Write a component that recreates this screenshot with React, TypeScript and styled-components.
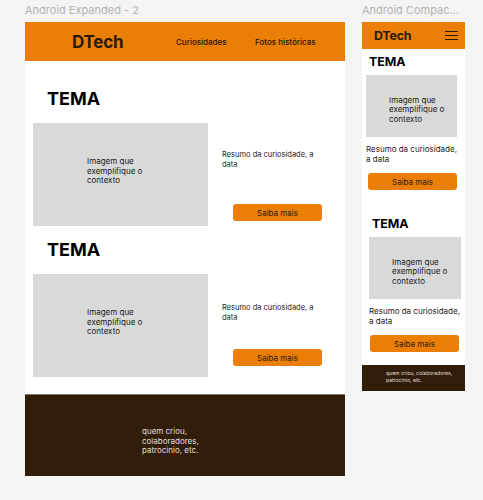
import React from "react";
import styled, { createGlobalStyle } from "styled-components";

const ORANGE = "#EB7F06";
const BROWN = "#301E0A";
const INK = "#2A1A08";

const Global = createGlobalStyle`
  html, body { margin: 0; padding: 0; background: #F4F4F4; }
  body { font-family: Inter, "Noto Sans", sans-serif; -webkit-font-smoothing: antialiased; }
  * { box-sizing: border-box; }
`;

const Canvas = styled.div`
  display: flex;
  align-items: flex-start;
  gap: 17px;
  padding-left: 25px;
  width: 483px;
  height: 500px;
  overflow: hidden;
`;

const Board = styled.div<{ $w: number }>`
  display: flex;
  flex-direction: column;
  width: ${(p) => p.$w}px;
`;

const BoardLabel = styled.div`
  font-size: 11px;
  line-height: 20px;
  height: 22px;
  color: #B3B3B3;
  white-space: nowrap;
  overflow: hidden;
`;

const Frame = styled.div`
  display: flex;
  flex-direction: column;
  background: #FFFFFF;
`;

/* ---------- Expanded ---------- */

const Header = styled.header`
  height: 39px;
  background: ${ORANGE};
  display: flex;
  align-items: center;
  padding-left: 47px;
`;

const Logo = styled.div<{ $size: number }>`
  font-size: ${(p) => p.$size}px;
  font-weight: 700;
  color: ${INK};
  letter-spacing: -0.2px;
`;

const BigLogoBox = styled.div`
  width: 104px;
`;

const Nav = styled.nav`
  display: flex;
  gap: 28.5px;
`;

const NavLink = styled.span`
  font-size: 8px;
  font-weight: 500;
  color: #1E1206;
`;

const Main = styled.main`
  display: flex;
  flex-direction: column;
  gap: 13px;
  padding: 27px 0 17px 8px;
`;

const Section = styled.section`
  display: flex;
  flex-direction: column;
`;

const Title = styled.h2`
  margin: 0 0 13px;
  padding-left: 14px;
  font-size: 18px;
  line-height: 22px;
  font-weight: 700;
  color: #000;
`;

const Row = styled.div`
  display: flex;
  gap: 14px;
`;

const ImageBox = styled.div<{ $w: number; $h: number; $pt: number; $pl: number }>`
  width: ${(p) => p.$w}px;
  height: ${(p) => p.$h}px;
  background: #D9D9D9;
  padding: ${(p) => p.$pt}px 0 0 ${(p) => p.$pl}px;
  flex-shrink: 0;
`;

const ImageCaption = styled.div`
  width: 68px;
  font-size: 8px;
  line-height: 9.5px;
  color: #1A1A1A;
`;

const Side = styled.div<{ $pt: number }>`
  display: flex;
  flex-direction: column;
  padding-top: ${(p) => p.$pt}px;
`;

const Summary = styled.p<{ $size: number }>`
  margin: 0;
  font-size: ${(p) => p.$size}px;
  line-height: 10px;
  color: #1A1A1A;
`;

const Button = styled.button<{ $w: number; $h: number; $mt: number; $ml: number }>`
  width: ${(p) => p.$w}px;
  height: ${(p) => p.$h}px;
  margin-top: ${(p) => p.$mt}px;
  margin-left: ${(p) => p.$ml}px;
  border: none;
  border-radius: 3px;
  background: ${ORANGE};
  font-family: Inter, "Noto Sans", sans-serif;
  font-size: 8px;
  color: ${INK};
  padding: 0;
  display: flex;
  align-items: center;
  justify-content: center;
`;

const Footer = styled.footer`
  height: 82px;
  background: ${BROWN};
  border-top: 1px solid #857A6E;
  padding: 32px 0 0 117px;
`;

const FooterText = styled.div<{ $size: number; $lh: number; $w: number }>`
  width: ${(p) => p.$w}px;
  font-size: ${(p) => p.$size}px;
  line-height: ${(p) => p.$lh}px;
  color: #E2DED9;
`;

/* ---------- Compact ---------- */

const CompactHeader = styled.header`
  height: 27px;
  background: ${ORANGE};
  display: flex;
  align-items: center;
  justify-content: space-between;
  padding: 0 7px 0 12px;
`;

const Burger = styled.div`
  width: 13px;
  display: flex;
  flex-direction: column;
  gap: 3px;
  span {
    display: block;
    height: 1px;
    background: ${INK};
  }
`;

const CompactMain = styled.main`
  display: flex;
  flex-direction: column;
  gap: 26px;
  padding: 5px 0 13px 4px;
`;

const CompactSection = styled.section<{ $shift: number }>`
  display: flex;
  flex-direction: column;
  margin-left: ${(p) => p.$shift}px;
`;

const CompactTitle = styled.h3`
  margin: 0 0 6px;
  padding-left: 3px;
  font-size: 12.4px;
  line-height: 15px;
  font-weight: 700;
  color: #000;
`;

const CompactSummary = styled(Summary)`
  margin-top: 7px;
`;

const CompactFooter = styled.footer`
  height: 26px;
  background: ${BROWN};
  padding: 5px 0 0 24px;
`;

const items = [
  { sidePt: 27, btnMt: 34 },
  { sidePt: 29, btnMt: 26 },
];

export default function App() {
  return (
    <>
      <Global />
      <Canvas>
        <Board $w={320}>
          <BoardLabel>Android Expanded - 2</BoardLabel>
          <Frame>
            <Header>
              <BigLogoBox>
                <Logo $size={17}>DTech</Logo>
              </BigLogoBox>
              <Nav>
                <NavLink>Curiosidades</NavLink>
                <NavLink>Fotos históricas</NavLink>
              </Nav>
            </Header>
            <Main>
              {items.map((it, i) => (
                <Section key={i}>
                  <Title>TEMA</Title>
                  <Row>
                    <ImageBox $w={175} $h={103} $pt={34} $pl={54}>
                      <ImageCaption>Imagem que exemplifique o contexto</ImageCaption>
                    </ImageBox>
                    <Side $pt={it.sidePt}>
                      <Summary $size={7.5}>
                        Resumo da curiosidade, a
                        <br />
                        data
                      </Summary>
                      <Button $w={89} $h={17} $mt={it.btnMt} $ml={11}>
                        Saiba mais
                      </Button>
                    </Side>
                  </Row>
                </Section>
              ))}
            </Main>
            <Footer>
              <FooterText $size={8} $lh={9.5} $w={70}>
                quem criou, colaboradores, patrocinio, etc.
              </FooterText>
            </Footer>
          </Frame>
        </Board>

        <Board $w={103}>
          <BoardLabel>Android Compac...</BoardLabel>
          <Frame>
            <CompactHeader>
              <Logo $size={12.4}>DTech</Logo>
              <Burger>
                <span />
                <span />
                <span />
              </Burger>
            </CompactHeader>
            <CompactMain>
              {[0, 3].map((shift, i) => (
                <CompactSection key={i} $shift={shift}>
                  <CompactTitle>TEMA</CompactTitle>
                  <ImageBox $w={91 + (shift ? 1 : 0)} $h={62} $pt={20.5} $pl={23}>
                    <ImageCaption>Imagem que exemplifique o contexto</ImageCaption>
                  </ImageBox>
                  <CompactSummary $size={8}>
                    Resumo da curiosidade,
                    <br />a data
                  </CompactSummary>
                  <Button $w={89} $h={17} $mt={9} $ml={2 - (shift ? 1 : 0)}>
                    Saiba mais
                  </Button>
                </CompactSection>
              ))}
            </CompactMain>
            <CompactFooter>
              <FooterText $size={5.1} $lh={7} $w={70}>
                quem criou, colaboradores, patrocinio, etc.
              </FooterText>
            </CompactFooter>
          </Frame>
        </Board>
      </Canvas>
    </>
  );
}
